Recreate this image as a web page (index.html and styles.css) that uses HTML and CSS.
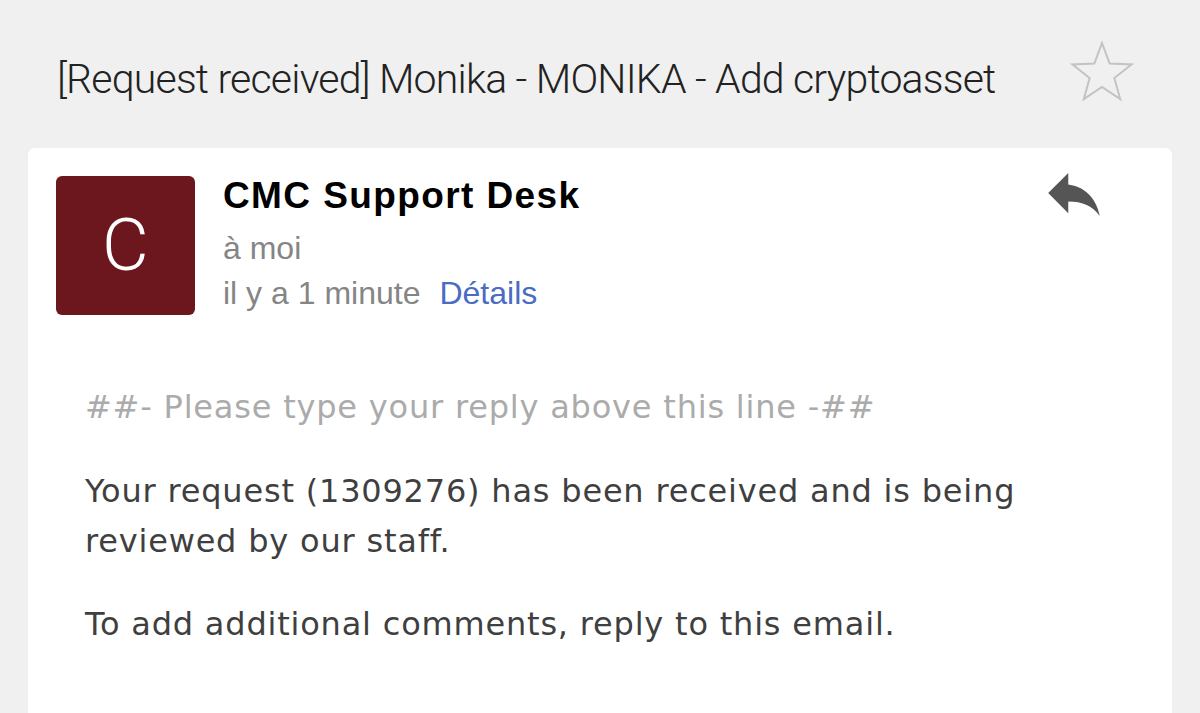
FILE: index.html
```html
<!DOCTYPE html>
<html>
<head>
<meta charset="utf-8">
<link rel="stylesheet" href="styles.css">
</head>
<body>
<div class="page">
  <header class="subject-row">
    <h1 class="subject">[Request received] Monika - MONIKA - Add cryptoasset</h1>
    <svg class="star" viewBox="0 0 64 62" width="64" height="62">
      <polygon points="32,2 39.64,22.48 61.48,23.42 44.36,37.02 50.23,58.08 32,46 13.77,58.08 19.64,37.02 2.52,23.42 24.36,22.48" fill="none" stroke="#c3c3c3" stroke-width="2" stroke-linejoin="miter"/>
    </svg>
  </header>
  <main class="card">
    <div class="head">
      <div class="avatar">C</div>
      <div class="meta">
        <div class="sender">CMC Support Desk</div>
        <div class="to">à moi</div>
        <div class="when">il y a 1 minute<a class="details">Détails</a></div>
      </div>
      <svg class="reply" viewBox="3 5 18 15" width="52" height="43">
        <path d="M10 9V5l-7 7 7 7v-4.1c5 0 8.5 1.6 11 5.1-1-5-4-10-11-11z" fill="#555"/>
      </svg>
    </div>
    <div class="body">
      <p class="sep">##- Please type your reply above this line -##</p>
      <p>Your request (1309276) has been received and is being reviewed by our staff.</p>
      <p>To add additional comments, reply to this email.</p>
    </div>
  </main>
</div>
</body>
</html>
```
FILE: styles.css
```css
html, body {
  margin: 0;
  padding: 0;
  background: #f0f0f0;
}
.page {
  width: 1200px;
  height: 713px;
  overflow: hidden;
}
.subject-row {
  display: flex;
  align-items: flex-start;
  justify-content: space-between;
  padding: 41px 66px 0 57px;
  height: 148px;
  box-sizing: border-box;
}
.subject {
  margin: 13px 0 0 0;
  font-family: Roboto, "Liberation Sans", sans-serif;
  font-weight: 300;
  font-size: 41px;
  line-height: 50px;
  color: #222;
  letter-spacing: -0.8px;
}
.star {
  display: block;
}
.card {
  margin: 0 28px;
  background: #fff;
  border-radius: 7px;
  height: 600px;
}
.head {
  display: flex;
  align-items: flex-start;
  padding: 28px 72px 0 28px;
}
.avatar {
  width: 139px;
  height: 139px;
  border-radius: 6px;
  background: #6b171d;
  color: #fff;
  font-family: Roboto, "Liberation Sans", sans-serif;
  font-weight: 300;
  font-size: 72px;
  line-height: 139px;
  text-align: center;
  flex: none;
}
.meta {
  flex: 1;
  padding-left: 28px;
  font-family: "Liberation Sans", Arial, sans-serif;
}
.sender {
  font-weight: bold;
  font-size: 37px;
  line-height: 40px;
  letter-spacing: 1.4px;
  color: #000;
}
.to, .when {
  font-size: 32px;
  line-height: 45px;
  color: #858585;
}
.to { margin-top: 10px; }
.details {
  color: #4a6cc3;
  margin-left: 19px;
}
.reply {
  display: block;
  margin-top: -3px;
}
.body {
  padding: 66px 0 0 57px;
  font-family: "DejaVu Sans", Verdana, sans-serif;
  font-size: 32px;
  line-height: 50px;
  letter-spacing: 0.8px;
  color: #3f3f3f;
}
.body p {
  margin: 0 0 33px 0;
  width: 1000px;
}
.body p.sep {
  color: #ababab;
  margin-bottom: 34px;
}
```
